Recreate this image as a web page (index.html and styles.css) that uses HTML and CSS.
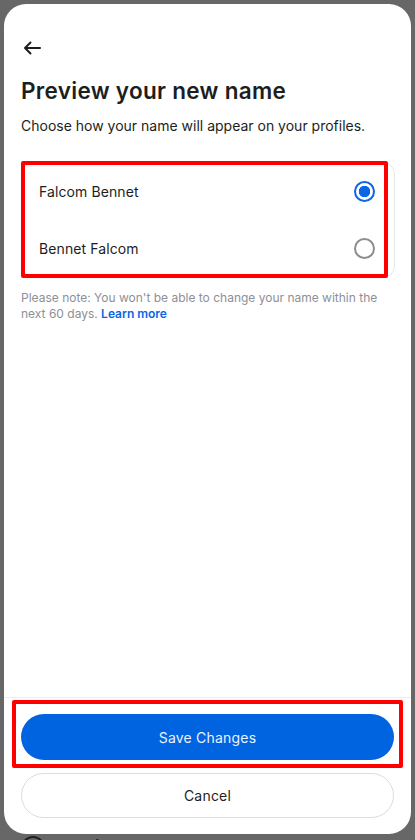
FILE: index.html
```html
<!DOCTYPE html>
<html lang="en">
<head>
<meta charset="utf-8">
<title>Preview your new name</title>
<link rel="stylesheet" href="styles.css">
</head>
<body>
<div class="screen">
  <div class="sheet">
    <div class="topbar">
      <svg class="back" width="18" height="14" viewBox="0 0 18 14" aria-hidden="true">
        <path d="M17 7H2M7.5 1.5L2 7l5.5 5.5" fill="none" stroke="#1c1e21" stroke-width="2" stroke-linecap="round" stroke-linejoin="round"/>
      </svg>
    </div>
    <h1 class="title">Preview your new name</h1>
    <p class="subtitle">Choose how your name will appear on your profiles.</p>

    <div class="card-wrap">
      <div class="card">
        <div class="option">
          <span class="option-label">Falcom Bennet</span>
          <span class="radio radio-on"></span>
        </div>
        <div class="option">
          <span class="option-label">Bennet Falcom</span>
          <span class="radio"></span>
        </div>
      </div>
      <div class="mark mark-card"></div>
    </div>

    <p class="note">Please note: You won't be able to change your name within the next 60 days. <a class="link" href="#">Learn more</a></p>

    <div class="spacer"></div>

    <div class="footer">
      <div class="save-wrap">
        <button class="btn btn-primary">Save Changes</button>
        <div class="mark mark-save"></div>
      </div>
      <button class="btn btn-secondary">Cancel</button>
    </div>
  </div>
  <div class="below">
    <span class="below-icon"></span>
    <span class="below-text">Email and Phone</span>
  </div>
</div>
</body>
</html>
```

FILE: styles.css
```css
* { box-sizing: border-box; }

html, body {
  margin: 0;
  padding: 0;
  height: 840px;
  overflow: hidden;
  background: #676767;
  font-family: "Inter", "Roboto", "Liberation Sans", sans-serif;
  color: #1c1e21;
}

.screen {
  height: 840px;
  padding: 4px 4px 0 4px;
  display: flex;
  flex-direction: column;
}

.sheet {
  width: 407px;
  height: 830px;
  background: #ffffff;
  border-radius: 22px;
  display: flex;
  flex-direction: column;
  flex-shrink: 0;
}

.topbar {
  height: 60px;
  padding: 37px 0 0 19px;
}

.back { display: block; }

.title {
  margin: 13px 0 0 17px;
  font-size: 22.5px;
  line-height: 28px;
  font-weight: 600;
  letter-spacing: 0.3px;
  color: #1c1e21;
}

.subtitle {
  margin: 11px 0 0 17px;
  font-size: 14px;
  line-height: 20px;
  color: #1c1e21;
}

.card-wrap {
  position: relative;
  margin: 26px 16px 0 17px;
}

.card {
  border: 1px solid #e4e6eb;
  border-radius: 12px;
  margin-left: 1px;
}

.option {
  height: 57px;
  display: flex;
  align-items: center;
  justify-content: space-between;
  padding: 0 19px 0 16px;
}

.option-label {
  font-size: 14px;
  color: #1c1e21;
  letter-spacing: 0.1px;
}

.radio {
  width: 21px;
  height: 21px;
  border-radius: 50%;
  border: 2px solid #8a8d91;
}

.radio-on {
  border-color: #0a66e4;
  background: radial-gradient(circle, #0a66e4 0 5.5px, #ffffff 6px);
}

.mark {
  position: absolute;
  border: 4px solid #ff0000;
  border-radius: 2px;
  pointer-events: none;
}

.mark-card {
  left: 0;
  top: -1px;
  width: 367px;
  height: 117px;
}

.note {
  margin: 12px 16px 0 17px;
  font-size: 12px;
  line-height: 16px;
  color: #8d9096;
}

.link {
  color: #0a66e4;
  font-weight: 600;
  text-decoration: none;
}

.spacer { flex: 1; }

.footer {
  border-top: 1px solid #eceef0;
  padding: 16px 17px 0 17px;
  height: 137px;
  display: flex;
  flex-direction: column;
  gap: 13px;
}

.save-wrap { position: relative; }

.btn {
  display: block;
  width: 100%;
  border-radius: 24px;
  font-family: inherit;
  font-size: 14px;
  letter-spacing: 0.2px;
}

.btn-primary {
  height: 46px;
  background: #0064e0;
  border: none;
  color: #eaf2ff;
}

.btn-secondary {
  height: 45px;
  background: #ffffff;
  border: 1px solid #d8dde3;
  color: #1c1e21;
}

.mark-save {
  left: -9px;
  top: -14px;
  width: 391px;
  height: 68px;
}

.below {
  display: flex;
  align-items: flex-start;
  gap: 12px;
  padding: 2px 0 0 17px;
  height: 6px;
  overflow: hidden;
}

.below-icon {
  width: 24px;
  height: 24px;
  border: 2.5px solid #1c1e21;
  border-radius: 50%;
  flex-shrink: 0;
}

.below-text {
  font-size: 18px;
  font-weight: 700;
  line-height: 22px;
  color: #1c1e21;
}
```
